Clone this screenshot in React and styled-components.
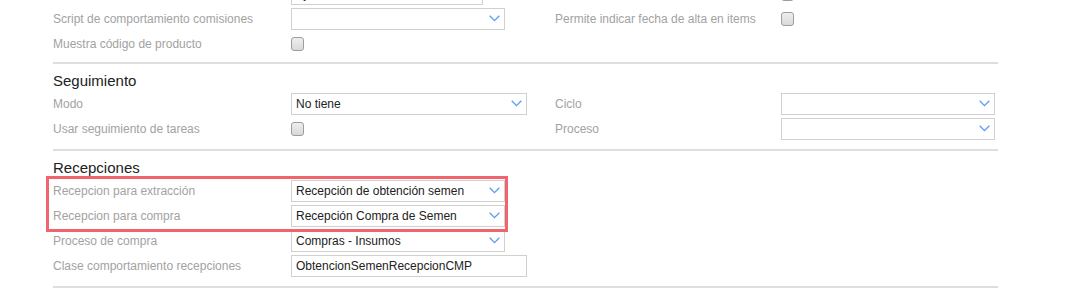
import React from 'react';
import styled, { createGlobalStyle } from 'styled-components';

const GlobalStyle = createGlobalStyle`
  html, body {
    margin: 0;
    padding: 0;
    background: #fff;
  }
  body {
    font-family: "Liberation Sans", Arial, sans-serif;
    overflow: hidden;
  }
`;

const Page = styled.div`
  width: 945px;
  margin: -19px 0 0 53px;
`;

const Row = styled.div`
  display: grid;
  grid-template-columns: 238px 264px 226px 217px;
  align-items: center;
  height: 25px;
`;

const Label = styled.span`
  font-size: 12px;
  color: #a2a2a2;
  white-space: nowrap;
`;

const Field = styled.div`
  box-sizing: border-box;
  width: ${({ $width }) => $width}px;
  height: 22px;
  display: flex;
  align-items: center;
  padding: 0 4px;
  border: 1px solid #d0d0d0;
  background: #fff;
  font-size: 12px;
  color: #222;
`;

const Value = styled.span`
  flex: 1;
  white-space: nowrap;
  overflow: hidden;
`;

const Checkbox = styled.span`
  box-sizing: border-box;
  width: 13px;
  height: 14px;
  border: 1px solid #9d9d9d;
  border-radius: 3px;
  background: linear-gradient(#eeeeee, #d9d9d9);
`;

const Divider = styled.div`
  height: 2px;
  background: #dedede;
  margin-top: ${({ $space }) => $space}px;
`;

const Heading = styled.h3`
  margin: 7px 0 0;
  font-size: 15px;
  font-weight: normal;
  line-height: 20px;
  color: #222;
`;

const Highlight = styled.div`
  position: relative;
`;

const HighlightFrame = styled.div`
  position: absolute;
  left: -7px;
  top: -2px;
  width: 462px;
  height: 56px;
  box-sizing: border-box;
  border: 3px solid #f0646d;
  pointer-events: none;
`;

const Chevron = () => (
  <svg width="11" height="7" viewBox="0 0 11 7">
    <path d="M0.7 0.8 L5.5 5.6 L10.3 0.8" fill="none" stroke="#5c9cf2" strokeWidth="1.3" />
  </svg>
);

const Select = ({ value, width = 214 }) => (
  <Field $width={width}>
    <Value>{value}</Value>
    <Chevron />
  </Field>
);

const Input = ({ value, width = 236 }) => (
  <Field $width={width}>
    <Value>{value}</Value>
  </Field>
);

const App = () => (
  <>
    <GlobalStyle />
    <Page>
      <Row>
        <Label />
        <Input value="Ej" width={192} />
        <Label />
        <Checkbox />
      </Row>
      <Row>
        <Label>Script de comportamiento comisiones</Label>
        <Select value="" />
        <Label>Permite indicar fecha de alta en items</Label>
        <Checkbox />
      </Row>
      <Row>
        <Label>Muestra código de producto</Label>
        <Checkbox />
      </Row>
      <Divider $space={6} />

      <Heading>Seguimiento</Heading>
      <Row>
        <Label>Modo</Label>
        <Select value="No tiene" width={236} />
        <Label>Ciclo</Label>
        <Select value="" />
      </Row>
      <Row>
        <Label>Usar seguimiento de tareas</Label>
        <Checkbox />
        <Label>Proceso</Label>
        <Select value="" />
      </Row>
      <Divider $space={8} />

      <Heading>Recepciones</Heading>
      <Highlight>
        <HighlightFrame />
        <Row>
          <Label>Recepcion para extracción</Label>
          <Select value="Recepción de obtención semen" />
        </Row>
        <Row>
          <Label>Recepcion para compra</Label>
          <Select value="Recepción Compra de Semen" />
        </Row>
      </Highlight>
      <Row>
        <Label>Proceso de compra</Label>
        <Select value="Compras - Insumos" />
      </Row>
      <Row>
        <Label>Clase comportamiento recepciones</Label>
        <Input value="ObtencionSemenRecepcionCMP" />
      </Row>
      <Divider $space={8} />
    </Page>
  </>
);

export default App;
